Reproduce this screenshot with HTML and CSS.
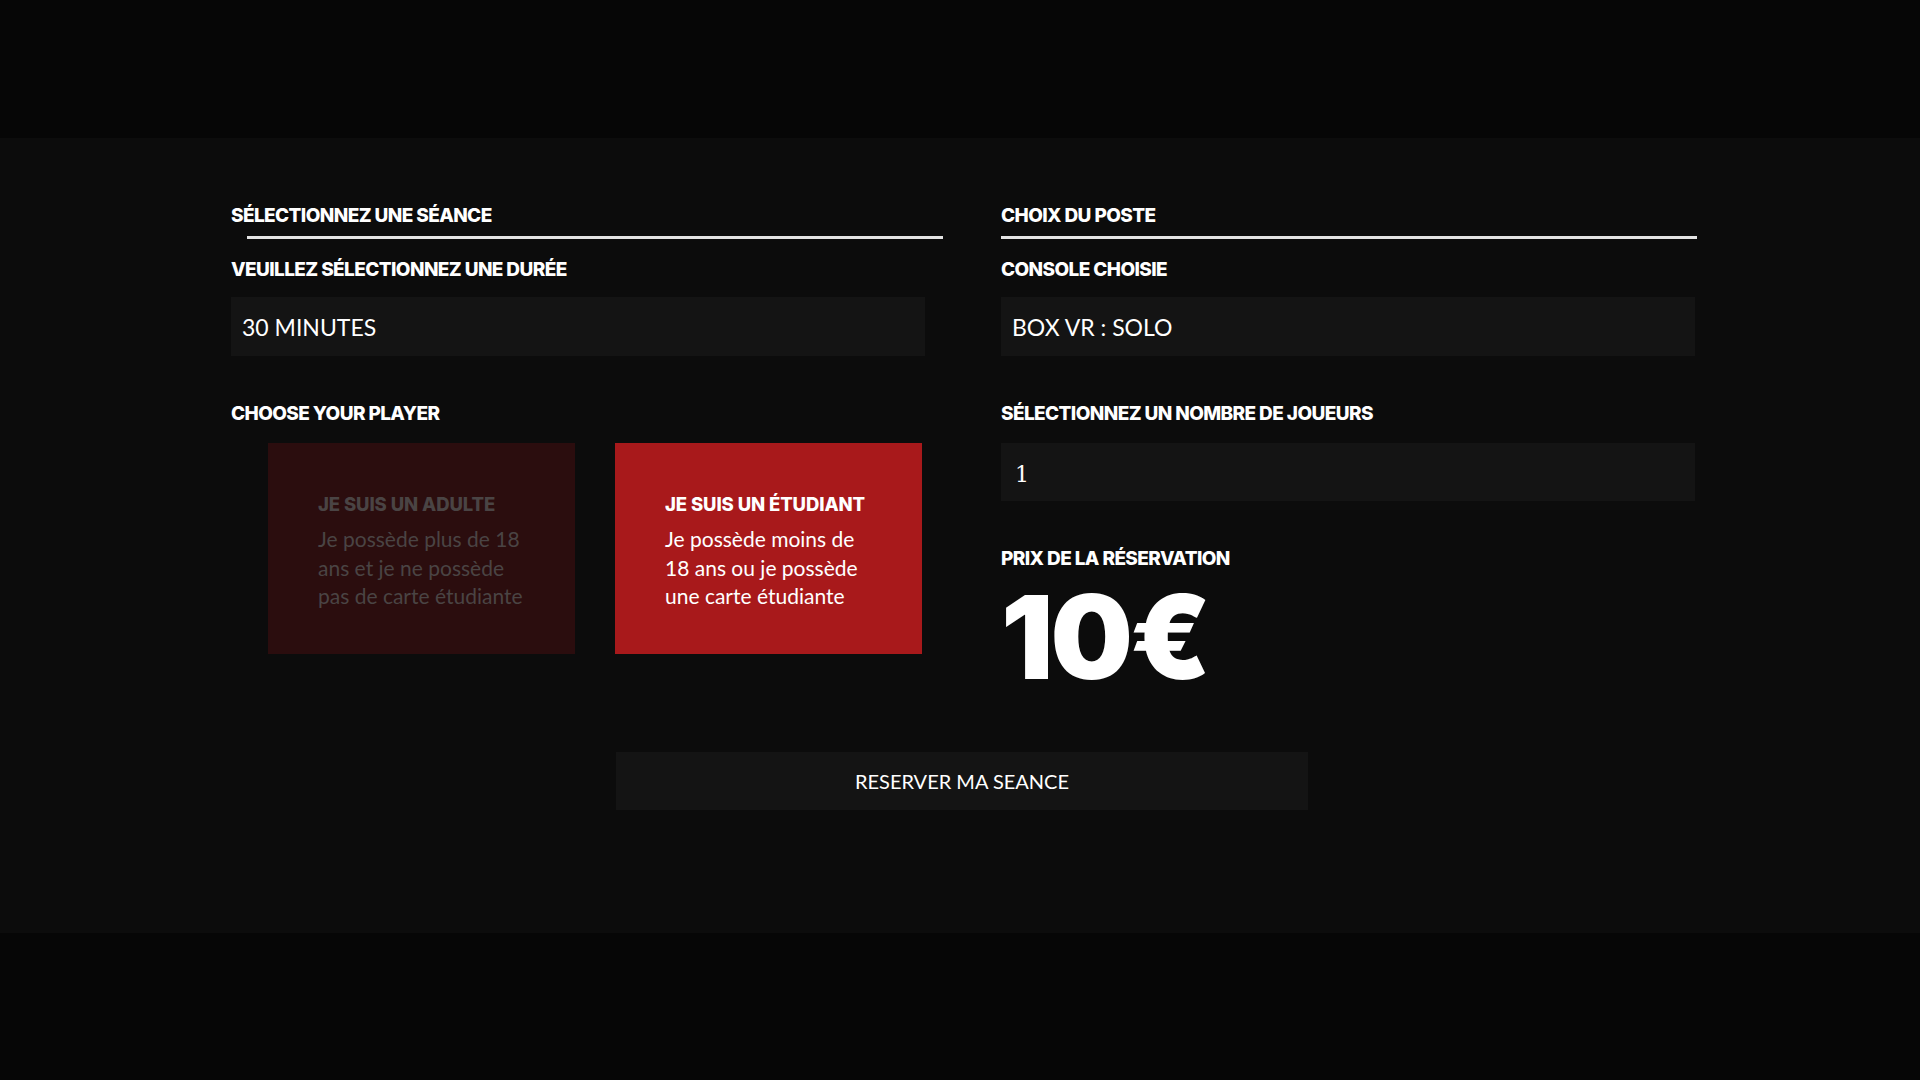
FILE: index.html
```html
<!DOCTYPE html>
<html lang="fr">
<head>
<meta charset="utf-8">
<title>Réservation</title>
<link rel="stylesheet" href="styles.css">
</head>
<body>
  <header class="top-band"></header>
  <main class="panel">
    <div class="columns">
      <section class="col col-left">
        <h2 class="section-title">SÉLECTIONNEZ UNE SÉANCE</h2>
        <div class="rule rule-left"></div>
        <h3 class="label">VEUILLEZ SÉLECTIONNEZ UNE DURÉE</h3>
        <div class="field">30 MINUTES</div>
        <h3 class="label label-gap">CHOOSE YOUR PLAYER</h3>
        <div class="cards">
          <div class="card card-off">
            <div class="card-title">JE SUIS UN ADULTE</div>
            <p class="card-text">Je possède plus de 18 ans et je ne possède pas de carte étudiante</p>
          </div>
          <div class="card card-on">
            <div class="card-title">JE SUIS UN ÉTUDIANT</div>
            <p class="card-text">Je possède moins de 18 ans ou je possède une carte étudiante</p>
          </div>
        </div>
      </section>
      <section class="col col-right">
        <h2 class="section-title">CHOIX DU POSTE</h2>
        <div class="rule"></div>
        <h3 class="label">CONSOLE CHOISIE</h3>
        <div class="field">BOX VR : SOLO</div>
        <h3 class="label label-gap">SÉLECTIONNEZ UN NOMBRE DE JOUEURS</h3>
        <div class="field field-num">1</div>
        <h3 class="label label-gap label-price">PRIX DE LA RÉSERVATION</h3>
        <div class="price">10€</div>
      </section>
    </div>
    <div class="actions">
      <button class="btn" type="button">RESERVER MA SEANCE</button>
    </div>
  </main>
</body>
</html>
```

FILE: styles.css
```css
* { box-sizing: border-box; }
html, body { margin: 0; padding: 0; }
body {
  background: #060606;
  color: #fff;
  font-family: "Inter", "Open Sans", sans-serif;
  height: 1080px;
  overflow: hidden;
}
.top-band { height: 138px; background: #060606; }
.panel {
  background: #0c0c0c;
  height: 795px;
  padding-top: 66px;
}
.columns {
  display: grid;
  grid-template-columns: 712px 696px;
  column-gap: 58px;
  padding-left: 231px;
}
.section-title, .label {
  margin: 0;
  font-family: "Inter", sans-serif;
  font-weight: 800;
  font-size: 19px;
  line-height: 24px;
  letter-spacing: -0.6px;
  color: #fff;
}
.rule {
  height: 3px;
  background: #e4e4e4;
  margin-top: 8px;
  width: 696px;
}
.rule-left { margin-left: 16px; }
.label { margin-top: 19px; }
.label-gap { margin-top: 46px; }
.field {
  margin-top: 15px;
  width: 694px;
  height: 59px;
  background: #141414;
  padding-left: 11px;
  display: flex;
  align-items: center;
  font-family: "Lato", sans-serif;
  font-size: 23px;
  color: #fff;
}
.field-num {
  margin-top: 17px;
  height: 58px;
  padding-left: 14px;
  padding-top: 4px;
  font-family: "DejaVu Serif", serif;
  font-size: 22px;
}
.cards {
  display: flex;
  gap: 40px;
  margin-top: 17px;
  padding-left: 37px;
}
.card {
  width: 307px;
  height: 211px;
  padding: 50px 44px 0 50px;
}
.card-off { background: #2b0d0e; color: #4a4444; }
.card-on { background: #a8191b; color: #fff; }
.card-title {
  font-family: "Inter", sans-serif;
  font-weight: 800;
  font-size: 18.5px;
  line-height: 22px;
  letter-spacing: -0.1px;
  white-space: nowrap;
}
.card-text {
  margin: 10px 0 0;
  font-family: "Lato", sans-serif;
  font-size: 21px;
  line-height: 28.5px;
}
.price {
  margin-top: 8px;
  font-family: "Inter", sans-serif;
  font-weight: 900;
  font-size: 116px;
  line-height: 116px;
  letter-spacing: -3px;
  color: #fff;
}
.actions {
  display: flex;
  justify-content: center;
  padding-left: 4px;
  margin-top: 57px;
}
.btn {
  width: 692px;
  height: 58px;
  background: #141414;
  border: 0;
  color: #fff;
  font-family: "Lato", sans-serif;
  font-size: 20px;
  letter-spacing: 0;
  cursor: pointer;
}
```
